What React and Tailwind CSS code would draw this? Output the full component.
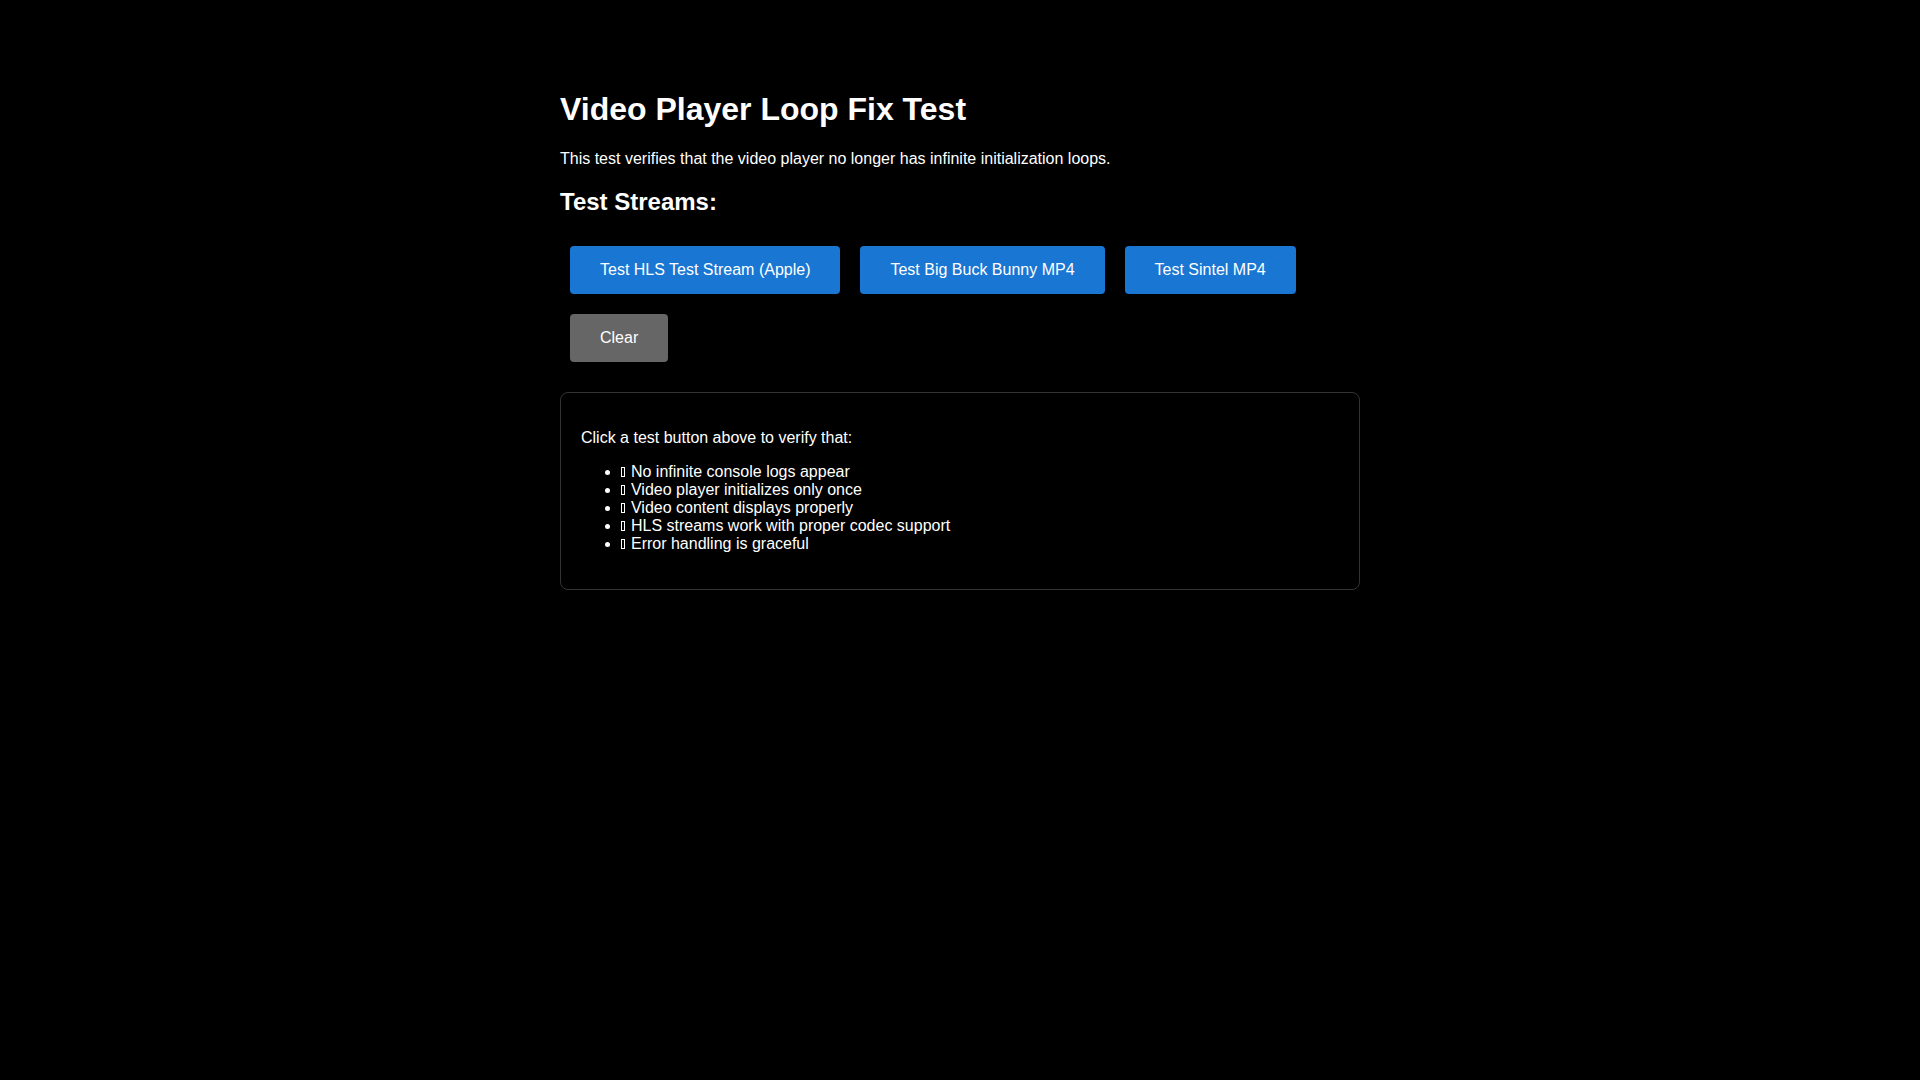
import React from "react";

const STREAMS = [
  { id: "hls", label: "Test HLS Test Stream (Apple)" },
  { id: "bbb", label: "Test Big Buck Bunny MP4" },
  { id: "sintel", label: "Test Sintel MP4" },
];

const CHECKS = [
  "No infinite console logs appear",
  "Video player initializes only once",
  "Video content displays properly",
  "HLS streams work with proper codec support",
  "Error handling is graceful",
];

// the check mark has no glyph in the page font, it shows as an empty box
function MissingGlyph() {
  return <span className="mr-[1.5px] inline-block h-[10px] w-[4px] border border-white" />;
}

export default function App() {
  return (
    <div className="min-h-screen bg-black text-white font-['Liberation_Sans',Arial,sans-serif]">
      <div className="mx-auto w-[800px] pt-[91px]">
        <h1 className="text-[32px] font-bold leading-[37px]">Video Player Loop Fix Test</h1>
        <p className="mt-[22px] text-[16px] leading-[18px]">
          This test verifies that the video player no longer has infinite initialization loops.
        </p>
        <h2 className="mt-[20px] text-[24px] font-bold leading-[28px]">Test Streams:</h2>

        {/* buttons */}
        <div className="mt-[20px] flex flex-wrap">
          {STREAMS.map(s => (
            <button
              key={s.id}
              className="m-[10px] h-[48px] rounded-[4px] bg-[#1976d2] px-[30px] text-[16px] text-white"
            >
              {s.label}
            </button>
          ))}
          <button className="m-[10px] h-[48px] rounded-[4px] bg-[#666666] px-[30px] text-[16px] text-white">
            Clear
          </button>
        </div>

        {/* status box */}
        <div className="mt-[20px] rounded-[8px] border border-[#333333] p-[20px]">
          <p className="mt-[16px] text-[16px] leading-[18px]">Click a test button above to verify that:</p>
          <ul className="my-[16px] list-disc pl-[40px] text-[16px] leading-[18px]">
            {CHECKS.map(c => (
              <li key={c}>
                <MissingGlyph /> {c}
              </li>
            ))}
          </ul>
        </div>
      </div>
    </div>
  );
}
